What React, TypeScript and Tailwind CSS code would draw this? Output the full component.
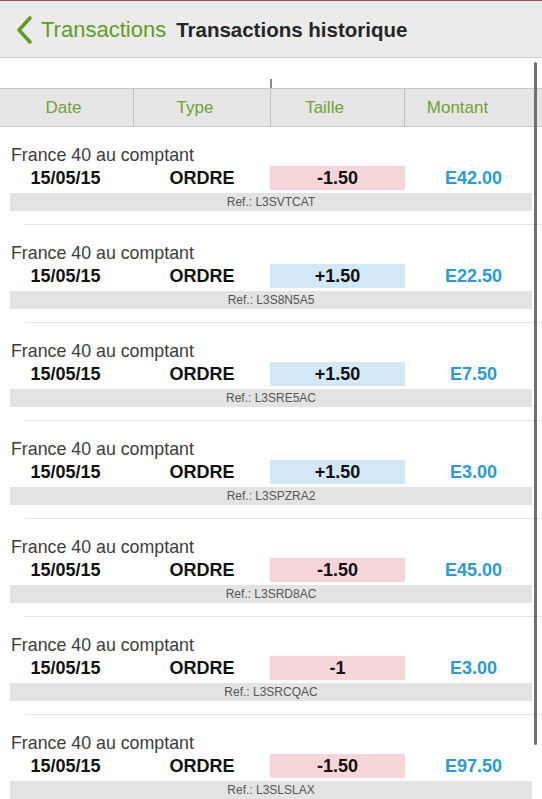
import React from "react";

type Row = { size: string; neg: boolean; amount: string; ref: string };

const rows: Row[] = [
  { size: "-1.50", neg: true, amount: "E42.00", ref: "L3SVTCAT" },
  { size: "+1.50", neg: false, amount: "E22.50", ref: "L3S8N5A5" },
  { size: "+1.50", neg: false, amount: "E7.50", ref: "L3SRE5AC" },
  { size: "+1.50", neg: false, amount: "E3.00", ref: "L3SPZRA2" },
  { size: "-1.50", neg: true, amount: "E45.00", ref: "L3SRD8AC" },
  { size: "-1", neg: true, amount: "E3.00", ref: "L3SRCQAC" },
  { size: "-1.50", neg: true, amount: "E97.50", ref: "L3SLSLAX" },
];

const font = { fontFamily: '"Liberation Sans", Arial, sans-serif' };

export default function App() {
  return (
    <div className="relative w-[542px] h-[799px] overflow-hidden bg-white" style={font}>
      <div className="h-[1px] bg-[#9a4d55]" />
      <div className="h-[57px] bg-[#ebebeb] border-b border-[#cfcfcf] flex items-center">
        <svg width="20" height="30" viewBox="0 0 20 30" className="ml-[15px] mt-[2px]">
          <polyline points="15,3 4,15 15,27" fill="none" stroke="#5f9c1f" strokeWidth="3.6" strokeLinecap="round" strokeLinejoin="round" />
        </svg>
        <span className="ml-[6px] mt-[2px] text-[22px] text-[#5f9c1f] leading-none">Transactions</span>
        <span className="ml-[10px] mt-[2px] text-[20.5px] font-bold text-[#262626] leading-none">Transactions historique</span>
      </div>
      <div className="h-[30px] relative">
        <div className="absolute left-[270px] top-[21px] w-[2px] h-[9px] bg-[#8a8a8a]" />
      </div>
      <div className="h-[39px] bg-[#e6e6e6] border-y border-[#c8c8c8] grid grid-cols-[134px_137px_134px_1fr] text-[17px] text-[#6ea232]">
        <div className="border-r border-[#bdbdbd] flex items-center justify-center pr-[6px]">Date</div>
        <div className="border-r border-[#bdbdbd] flex items-center justify-center pr-[14px]">Type</div>
        <div className="border-r border-[#bdbdbd] flex items-center justify-center pr-[26px]">Taille</div>
        <div className="flex items-center justify-center pr-[32px]">Montant</div>
      </div>
      {rows.map((r, i) => (
        <div key={i} className="relative h-[98px] pt-[17px]">
          <div className="pl-[11px] h-[20px] leading-[22px] text-[17.8px] text-[#3c3c3c]">France 40 au comptant</div>
          <div className="mt-[2px] h-[23px] grid grid-cols-[134px_136px_135px_1fr] text-[18px] font-bold leading-[24px]">
            <div className="text-center text-[#111] pr-[3px]">15/05/15</div>
            <div className="text-center text-[#111]">ORDRE</div>
            <div className={`text-center text-[#111] ${r.neg ? "bg-[#f7d6d9]" : "bg-[#d3e8f6]"}`}>{r.size}</div>
            <div className="text-center text-[#2b9bd3]">{r.amount}</div>
          </div>
          <div className="mt-[4px] mx-[10px] h-[18px] bg-[#e3e3e3] text-[12px] text-[#555] flex items-center justify-center">
            Ref.: {r.ref}
          </div>
          <div className="absolute left-[25px] right-0 bottom-0 h-[1px] bg-[#e4e4e4]" />
        </div>
      ))}
      <div className="absolute right-[5px] top-[62px] w-[3px] h-[683px] rounded-full bg-[#707070]" />
    </div>
  );
}
